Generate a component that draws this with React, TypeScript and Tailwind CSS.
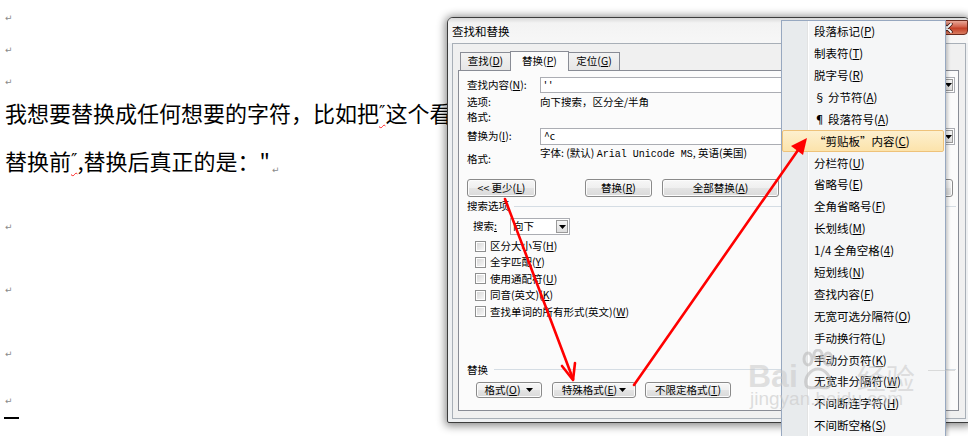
import React from "react";

function U({ children }: { children: React.ReactNode }) {
  return <span className="underline decoration-1 underline-offset-[1px]">{children}</span>;
}

function Mark() {
  return <span className="font-['DejaVu_Sans',sans-serif] text-[9px] leading-none text-[#8a8a8a]">↵</span>;
}

function Doc() {
  return (
    <div className="flex flex-col pl-[5px] text-black">
      <div className="mt-[10px] flex h-[16px] items-center"><Mark /></div>
      <div className="mt-[16px] flex h-[16px] items-center"><Mark /></div>
      <div className="mt-[16px] flex h-[16px] items-center"><Mark /></div>
      <div className="mt-[8px] flex h-[28px] items-center whitespace-nowrap text-[22px] leading-none">
        我想要替换成任何想要的字符，比如把
        <span className="font-['DejaVu_Sans',sans-serif] text-[17px] underline decoration-[#ff2020] decoration-wavy decoration-1 underline-offset-[6px]">″</span>
        这个看似双引号的符号替换成
      </div>
      <div className="mt-[20px] flex h-[28px] items-center whitespace-nowrap text-[22px] leading-none">
        替换前
        <span className="font-['DejaVu_Sans',sans-serif] text-[17px] underline decoration-[#ff2020] decoration-wavy decoration-1 underline-offset-[6px]">″</span>
        ,替换后真正的是："
        <span className="ml-[2px] mt-[6px]"><Mark /></span>
      </div>
      <div className="mt-[45px] flex h-[16px] items-center"><Mark /></div>
      <div className="mt-[47px] flex h-[16px] items-center"><Mark /></div>
      <div className="mt-[48px] flex h-[16px] items-center"><Mark /></div>
      <div className="mt-[31px] flex h-[16px] items-center"><Mark /></div>
      <div className="ml-[-1px] mt-[8px] h-[2px] w-[15px] bg-black" />
    </div>
  );
}

function Tri() {
  return (
    <svg width="7" height="4" viewBox="0 0 7 4">
      <path d="M0 0 L7 0 L3.5 4 Z" fill="#000" />
    </svg>
  );
}

function Combo({ text }: { text: string }) {
  return (
    <div className="flex h-full flex-1 items-center border border-[#abadb3] bg-white pl-[3px]">
      <span className="flex-1 whitespace-nowrap">{text}</span>
      <div className="mr-px flex h-[calc(100%-2px)] w-[9px] items-center justify-center border border-[#9a9a9a] bg-[linear-gradient(#f6f6f6,#dedede)]">
        <Tri />
      </div>
    </div>
  );
}

function Btn({ className, children }: { className: string; children: React.ReactNode }) {
  return (
    <div
      className={
        "flex h-full shrink-0 items-center justify-center whitespace-nowrap rounded-[3px] border border-[#8a8a8a] bg-[linear-gradient(#f7f7f7,#efefef_50%,#e4e4e4_50%,#dadada)] shadow-[inset_0_0_0_1px_#fcfcfc] " +
        className
      }
    >
      {children}
    </div>
  );
}

function Check({ label }: { label: React.ReactNode }) {
  return (
    <div className="flex h-[16.4px] items-center pl-[16px]">
      <div className="h-[11px] w-[11px] border border-[#8e8f8f] bg-white p-px">
        <div className="h-full w-full bg-[linear-gradient(135deg,#d8d8d8,#f6f6f6)]" />
      </div>
      <span className="ml-[4px] whitespace-nowrap">{label}</span>
    </div>
  );
}

function Dialog() {
  return (
    <div className="absolute left-[447px] top-[17px] flex h-[406px] w-[523px] flex-col rounded-b-[2px] rounded-t-[6px] border border-[#3c3c3c] bg-[#eef0f2] text-[10.5px] leading-none text-black shadow-[0_1px_9px_2px_rgba(0,0,0,0.45)]">
      <div className="relative flex h-[25px] shrink-0 items-center rounded-t-[5px] bg-[linear-gradient(#d9d9d9,#f3f3f3_5px,#f7f7f7)] pl-[4px] pt-[3px] text-[11.5px]">
        查找和替换
        <div className="absolute right-[1px] top-[2px] flex h-[15px] w-[42px] items-center justify-center rounded-b-[4px] border border-[#6b2a1e] bg-[linear-gradient(#e8a898,#d2604a_45%,#c23f26_55%,#d97c60)]">
          <svg width="12" height="10" viewBox="0 0 12 10">
            <path d="M2 1 L10 9 M10 1 L2 9" stroke="#3a1510" strokeWidth="3.4" strokeLinecap="round" />
            <path d="M2 1 L10 9 M10 1 L2 9" stroke="#ffffff" strokeWidth="1.8" strokeLinecap="round" />
          </svg>
        </div>
      </div>
      <div className="mb-[3px] ml-[4px] mr-[3px] flex flex-1 flex-col border border-[#a8afb7] bg-[#f0f0f0]">
        <div className="mt-[7px] flex h-[19px] items-end pl-[7px]">
          <div className="flex h-[18px] w-[51px] items-center justify-center border border-b-0 border-[#898c95] bg-[linear-gradient(#f3f3f3,#e6e6e6)]">
            查找(<U>D</U>)
          </div>
          <div className="relative z-10 -mb-px ml-[-1px] flex h-[20px] w-[59px] items-center justify-center border border-b-0 border-[#898c95] bg-[#fbfbfb] pb-[1px]">
            替换(<U>P</U>)
          </div>
          <div className="ml-[-1px] flex h-[18px] w-[52px] items-center justify-center border border-b-0 border-[#898c95] bg-[linear-gradient(#f3f3f3,#e6e6e6)]">
            定位(<U>G</U>)
          </div>
        </div>
        <div className="ml-[5px] mr-[6px] flex h-[341px] flex-col border border-[#898c95] bg-[#fbfbfb]">
          <div className="mt-[6px] flex h-[16px] items-center pl-[8px] pr-[3px]">
            <span className="w-[73px] whitespace-nowrap">查找内容(<U>N</U>):</span>
            <Combo text="' '" />
          </div>
          <div className="mt-[2px] flex h-[15px] items-center pl-[8px]">
            <span className="w-[73px]">选项:</span>
            <span>向下搜索，区分全/半角</span>
          </div>
          <div className="flex h-[15px] items-center pl-[8px]">
            <span className="w-[73px]">格式:</span>
          </div>
          <div className="mt-[3px] flex h-[17px] items-center pl-[8px] pr-[3px]">
            <span className="w-[73px] whitespace-nowrap">替换为(<U>I</U>):</span>
            <Combo text="^c" />
          </div>
          <div className="mt-px flex h-[20px] pl-[8px]">
            <span className="w-[73px] self-end leading-[14px]">格式:</span>
            <span className="self-start whitespace-nowrap leading-[14px]">
              字体: (默认) <span className="font-['Liberation_Mono',monospace] text-[10px]">Arial Unicode MS</span>, 英语(美国)
            </span>
          </div>
          <div className="mt-[13px] flex h-[18px] pl-[8px]">
            <Btn className="w-[69px]">&lt;&lt; 更少(<U>L</U>)</Btn>
            <Btn className="ml-[49px] w-[67px]">替换(<U>R</U>)</Btn>
            <Btn className="ml-[10px] w-[117px]">全部替换(<U>A</U>)</Btn>
            <Btn className="ml-[10px] w-[80px]">查找下一处(<U>F</U>)</Btn>
            <Btn className="ml-[10px] w-[74px]">取消</Btn>
          </div>
          <div className="mt-[2px] flex h-[14px] items-center pl-[8px] pr-[2px]">
            <span>搜索选项</span>
            <div className="ml-[5px] h-px flex-1 bg-[#d5dde4]" />
          </div>
          <div className="mt-[5px] flex h-[17px] items-center pl-[14px]">
            <span className="w-[37px]">搜索<U>:</U></span>
            <div className="flex h-full w-[60px] items-center border border-[#abadb3] bg-white pl-[2px]">
              <span className="flex-1">向下</span>
              <div className="mr-px flex h-[calc(100%-2px)] w-[12px] items-center justify-center border border-[#9a9a9a] bg-[linear-gradient(#f6f6f6,#dedede)]">
                <Tri />
              </div>
            </div>
          </div>
          <div className="mt-[3px] flex flex-col">
            <Check label={<>区分大小写(<U>H</U>)</>} />
            <Check label={<>全字匹配(<U>Y</U>)</>} />
            <Check label={<>使用通配符(<U>U</U>)</>} />
            <Check label={<>同音(英文)(<U>K</U>)</>} />
            <Check label={<>查找单词的所有形式(英文)(<U>W</U>)</>} />
          </div>
          <div className="mt-[43px] flex h-[14px] items-center pl-[8px] pr-[2px]">
            <span>替换</span>
            <div className="ml-[6px] h-px flex-1 bg-[#d5dde4]" />
          </div>
          <div className="mt-[5px] flex h-[16px] pl-[17px]">
            <Btn className="w-[66px] gap-[6px]">
              <span>格式(<U>O</U>)</span>
              <Tri />
            </Btn>
            <Btn className="ml-[10px] w-[84px] gap-[2px]">
              <span>特殊格式(<U>E</U>)</span>
              <Tri />
            </Btn>
            <Btn className="ml-[9px] w-[86px]">不限定格式(<U>T</U>)</Btn>
          </div>
        </div>
      </div>
    </div>
  );
}

const items: [string, string, string][] = [
  ["段落标记(", "P", ")"],
  ["制表符(", "T", ")"],
  ["脱字号(", "R", ")"],
  ["§ 分节符(", "A", ")"],
  ["¶ 段落符号(", "A", ")"],
  ["“剪贴板”内容(", "C", ")"],
  ["分栏符(", "U", ")"],
  ["省略号(", "E", ")"],
  ["全角省略号(", "F", ")"],
  ["长划线(", "M", ")"],
  ["1/4 全角空格(", "4", ")"],
  ["短划线(", "N", ")"],
  ["查找内容(", "F", ")"],
  ["无宽可选分隔符(", "O", ")"],
  ["手动换行符(", "L", ")"],
  ["手动分页符(", "K", ")"],
  ["无宽非分隔符(", "W", ")"],
  ["不间断连字符(", "H", ")"],
  ["不间断空格(", "S", ")"],
];

function Menu() {
  return (
    <div className="absolute left-[781px] top-[20px] h-[430px] w-[165px] border border-[#97a8c0] bg-[linear-gradient(to_right,#e8ebed_0px,#e8ebed_25px,#e2e3e3_25px,#e2e3e3_26px,#ffffff_26px,#ffffff_27px,#f5f6f7_27px)] text-[11.5px] leading-none text-black shadow-[2px_2px_3px_rgba(0,0,0,0.2)]">
      {items.map((it, i) =>
        i === 5 ? (
          <div
            key={i}
            className="mr-px flex h-[21.9px] items-center whitespace-nowrap rounded-[2px] border border-[#eec27a] bg-[linear-gradient(#fdf0cf,#fce3ab)] pl-[31px]"
          >
            {it[0]}
            <U>{it[1]}</U>
            {it[2]}
          </div>
        ) : (
          <div key={i} className="flex h-[21.9px] items-center whitespace-nowrap pl-[32px]">
            {it[0]}
            <U>{it[1]}</U>
            {it[2]}
          </div>
        )
      )}
    </div>
  );
}

function Arrows() {
  return (
    <svg className="pointer-events-none absolute left-0 top-0" width="968" height="436" viewBox="0 0 968 436">
      <g stroke="#ff0000" strokeWidth="2.6" fill="none" strokeLinecap="round" strokeLinejoin="round">
        <path d="M505 199 L573 379" />
        <path d="M562 366 L573 380 L575 363" />
        <path d="M634 385 L803 143" />
      </g>
      <path d="M807 138 L791 146 L803 155 Z" fill="#ff0000" />
    </svg>
  );
}

function Watermark() {
  return (
    <div className="pointer-events-none absolute left-0 top-0 h-[436px] w-[968px] font-['Liberation_Sans',sans-serif]">
      <div className="absolute left-[748px] top-[349px] flex items-end text-[32px] font-bold leading-none text-[rgba(200,200,200,0.55)]">
        <span>Bai</span>
        <svg className="mb-[1px] ml-[3px]" width="34" height="42" viewBox="0 0 34 42">
          <g fill="none" stroke="rgba(185,185,185,0.6)" strokeWidth="3">
            <ellipse cx="7" cy="10" rx="4" ry="6" />
            <ellipse cx="17" cy="6" rx="4" ry="5" />
            <ellipse cx="27" cy="10" rx="4" ry="6" />
            <path d="M5 36 C3 28 10 20 17 20 C24 20 31 28 29 36 C27 41 21 38 17 38 C13 38 7 41 5 36 Z" />
          </g>
        </svg>
        <span className="ml-[22px] font-['Noto_Sans_CJK_SC',sans-serif] text-[29px] font-normal">经验</span>
      </div>
      <div className="absolute left-[928px] top-[370px] h-px w-[27px] bg-[rgba(190,190,190,0.5)]" />
      <div className="absolute left-[750px] top-[389px] text-[19px] leading-none text-[rgba(200,200,200,0.6)]">
        jingyan.baidu.com
      </div>
    </div>
  );
}

export default function App() {
  return (
    <div className="relative h-[436px] w-[968px] overflow-hidden bg-white font-['Noto_Sans_CJK_SC',sans-serif]">
      <Doc />
      <Dialog />
      <Menu />
      <Arrows />
      <Watermark />
    </div>
  );
}
